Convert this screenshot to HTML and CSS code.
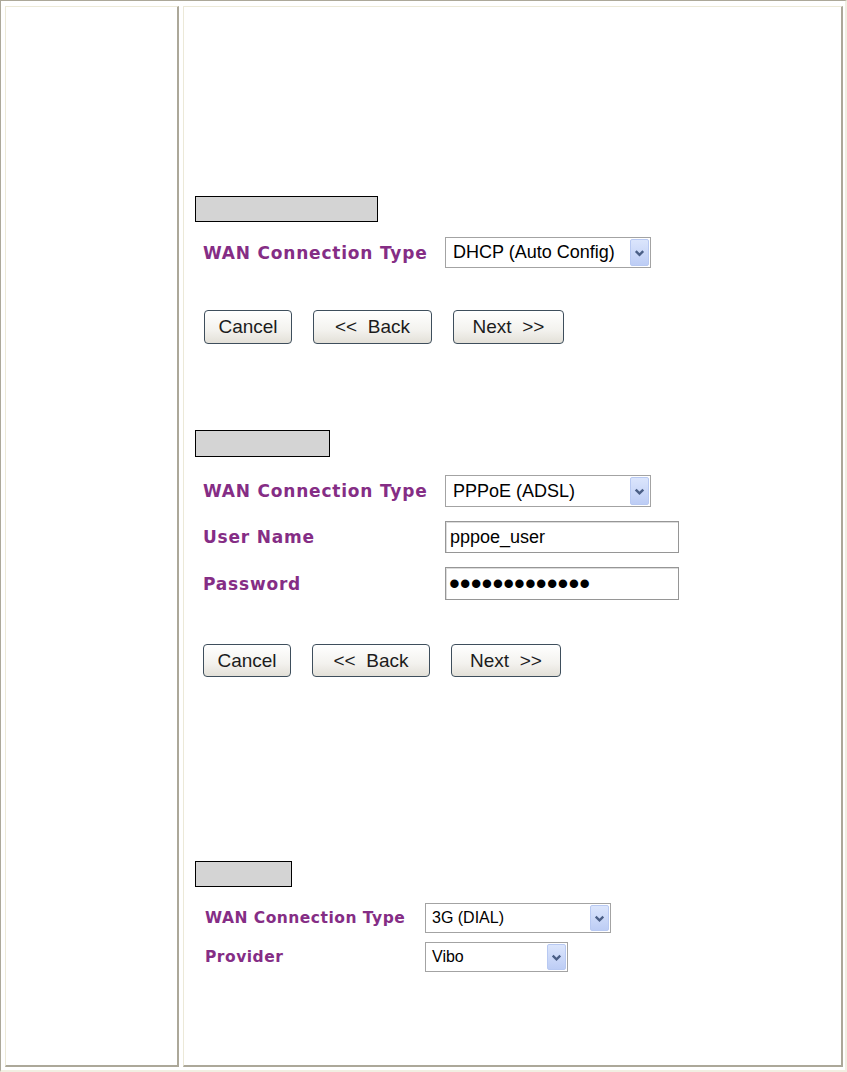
FILE: index.html
```html
<!DOCTYPE html>
<html>

<head>
    <meta charset="utf-8">
    <title>WAN Setup</title>
    <meta name="viewport" content="width=device-width, initial-scale=1">
    <link rel="stylesheet" href="styles.css">
</head>

<body>
    <div class="frame">
        <div class="cell cell-nav"></div>
        <div class="cell cell-main">

            <div class="shot shot-dhcp">
                <div class="caption"></div>
                <div class="row">
                    <span class="label">WAN Connection Type</span>
                    <div class="select">
                        <span class="select-value">DHCP (Auto Config)</span>
                        <span class="select-arrow"><svg viewBox="0 0 18 27" width="18" height="27"><path d="M5 12 L9 16 L13 12" fill="none" stroke="#4b5f86" stroke-width="2.6"/></svg></span>
                    </div>
                </div>
                <div class="buttons">
                    <button class="btn btn-cancel">Cancel</button>
                    <button class="btn btn-back">&lt;&lt;  Back</button>
                    <button class="btn btn-next">Next  &gt;&gt;</button>
                </div>
            </div>

            <div class="shot shot-pppoe">
                <div class="caption"></div>
                <div class="row">
                    <span class="label">WAN Connection Type</span>
                    <div class="select">
                        <span class="select-value">PPPoE (ADSL)</span>
                        <span class="select-arrow"><svg viewBox="0 0 18 27" width="18" height="27"><path d="M5 12 L9 16 L13 12" fill="none" stroke="#4b5f86" stroke-width="2.6"/></svg></span>
                    </div>
                </div>
                <div class="row">
                    <span class="label">User Name</span>
                    <input class="field" type="text" value="pppoe_user">
                </div>
                <div class="row">
                    <span class="label">Password</span>
                    <input class="field field-secret" type="password" value="pppoepassword">
                </div>
                <div class="buttons">
                    <button class="btn btn-cancel">Cancel</button>
                    <button class="btn btn-back">&lt;&lt;  Back</button>
                    <button class="btn btn-next">Next  &gt;&gt;</button>
                </div>
            </div>

            <div class="shot shot-3g">
                <div class="caption"></div>
                <div class="row">
                    <span class="label">WAN Connection Type</span>
                    <div class="select select-type">
                        <span class="select-value">3G (DIAL)</span>
                        <span class="select-arrow"><svg viewBox="0 0 18 25" width="18" height="25"><path d="M5 11 L9 15 L13 11" fill="none" stroke="#4b5f86" stroke-width="2.4"/></svg></span>
                    </div>
                </div>
                <div class="row">
                    <span class="label">Provider</span>
                    <div class="select select-provider">
                        <span class="select-value">Vibo</span>
                        <span class="select-arrow"><svg viewBox="0 0 18 25" width="18" height="25"><path d="M5 11 L9 15 L13 11" fill="none" stroke="#4b5f86" stroke-width="2.4"/></svg></span>
                    </div>
                </div>
            </div>

        </div>
    </div>
</body>

</html>
```

FILE: styles.css
```css
body {
    margin: 0;
    background-color: white;
    font-family: 'Liberation Sans', Arial, sans-serif;
    color: black;
}

.frame {
    display: grid;
    grid-template-columns: 174px 660px;
    column-gap: 4px;
    height: 1072px;
    box-sizing: border-box;
    border-style: solid;
    border-width: 1px 2px 2px 1px;
    border-color: #aca899 #f1efe2 #f1efe2 #aca899;
    padding: 5px 2px 3px 4px;
}

.cell {
    border-style: solid;
    border-width: 1px 2px 2px 1px;
    border-color: #ece9d8 #aca899 #aca899 #ece9d8;
}

.cell-main {
    padding-left: 11px;
}

/* grey caption bars */
.caption {
    box-sizing: border-box;
    height: 26px;
    background-color: #d4d4d4;
    border: 1px solid black;
}

.shot-dhcp>.caption {
    margin-top: 189px;
    width: 183px;
}

.shot-pppoe>.caption {
    margin-top: 86px;
    width: 135px;
    height: 27px;
}

.shot-3g>.caption {
    margin-top: 184px;
    width: 97px;
}

/* form rows */
.row {
    display: flex;
    align-items: center;
}

.label {
    flex: none;
    width: 242px;
    margin-left: 8px;
    font-family: 'DejaVu Sans', Verdana, sans-serif;
    font-weight: bold;
    font-size: 17px;
    letter-spacing: 0.8px;
    color: #852d85;
    white-space: nowrap;
}

.shot-dhcp .row {
    margin-top: 15px;
}

.shot-pppoe .row {
    margin-top: 14px;
}

.shot-pppoe .caption+.row {
    margin-top: 18px;
}

.shot-3g .row {
    margin-top: 9px;
}

.shot-3g .caption+.row {
    margin-top: 16px;
}

.shot-3g .label {
    width: 220px;
    margin-left: 10px;
    font-size: 15.5px;
    letter-spacing: 0.5px;
}

/* fake drop downs */
.select {
    box-sizing: border-box;
    display: flex;
    align-items: center;
    width: 206px;
    height: 31px;
    padding: 1px;
    border: 1px solid #a3a3a3;
    background-color: white;
    font-size: 18px;
}

.shot-pppoe .select {
    height: 32px;
}

.select-value {
    flex: 1;
    padding-left: 6px;
    white-space: nowrap;
}

.select-arrow {
    flex: none;
    display: flex;
    width: 19px;
    height: 100%;
    box-sizing: border-box;
    border: 1px solid #b8c9f2;
    border-radius: 2px;
    background: linear-gradient(#dbe5fc, #bdcdf5);
}

.select-arrow>svg {
    width: 100%;
    height: 100%;
}

.select-type {
    width: 186px;
    height: 30px;
    font-size: 16px;
}

.select-provider {
    width: 143px;
    height: 30px;
    font-size: 16px;
}

.select-type .select-value,
.select-provider .select-value {
    padding-left: 5px;
}

/* text boxes */
.field {
    box-sizing: border-box;
    width: 234px;
    height: 32px;
    margin: 0;
    padding: 0 4px;
    border: 1px solid #969696;
    box-shadow: inset 1px 1px 0 #dcdcdc;
    font-family: 'Liberation Sans', Arial, sans-serif;
    font-size: 18px;
    color: black;
}

.field-secret {
    height: 33px;
    padding: 0 3px;
    font-size: 31px;
}

/* wizard buttons */
.buttons {
    display: flex;
    gap: 21px;
    margin-left: 9px;
}

.shot-dhcp>.buttons {
    margin-top: 42px;
}

.shot-pppoe>.buttons {
    margin-top: 44px;
    margin-left: 8px;
}

.btn {
    box-sizing: border-box;
    height: 34px;
    margin: 0;
    padding: 0;
    border: 1px solid #3e4e5c;
    border-radius: 4px;
    background: linear-gradient(#ffffff, #f3f2ee 60%, #e3e0d8);
    font-family: 'Liberation Sans', Arial, sans-serif;
    font-size: 19px;
    color: #1c1c1c;
    white-space: pre;
}

.shot-pppoe .btn {
    height: 33px;
}

.btn-cancel {
    width: 88px;
}

.btn-back {
    width: 119px;
}

.btn-next {
    width: 111px;
}

.shot-pppoe .btn-back {
    width: 118px;
}

.shot-pppoe .btn-next {
    width: 110px;
}
```
